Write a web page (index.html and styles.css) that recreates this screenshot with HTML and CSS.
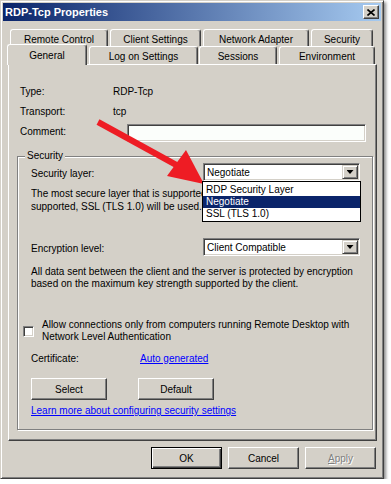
FILE: index.html
```html
<!DOCTYPE html>
<html lang="en">
<head>
    <meta charset="UTF-8">
    <meta name="viewport" content="width=device-width, initial-scale=1.0">
    <title>RDP-Tcp Properties</title>
    <link rel="stylesheet" href="styles.css">
</head>
<body>
    <div class="window">
        <div class="titlebar">
            <span class="title">RDP-Tcp Properties</span>
            <span class="close-btn">
                <svg width="8" height="7" viewBox="0 0 8 7">
                    <path d="M0.5 0.5 L7.5 6.5 M7.5 0.5 L0.5 6.5" stroke="#000" stroke-width="1.6" fill="none"/>
                </svg>
            </span>
        </div>

        <div class="dialog-body">
            <!-- Вкладки -->
            <div class="tabs">
                <div class="tab-row back-row">
                    <div class="tab tab-remote">Remote Control</div>
                    <div class="tab tab-client">Client Settings</div>
                    <div class="tab tab-network">Network Adapter</div>
                    <div class="tab tab-security">Security</div>
                </div>
                <div class="tab-row front-row">
                    <div class="tab tab-general selected">General</div>
                    <div class="tab tab-logon">Log on Settings</div>
                    <div class="tab tab-sessions">Sessions</div>
                    <div class="tab tab-env">Environment</div>
                </div>
            </div>

            <div class="panel">
                <div class="info-row">
                    <span class="info-label">Type:</span>
                    <span>RDP-Tcp</span>
                </div>
                <div class="info-row">
                    <span class="info-label">Transport:</span>
                    <span>tcp</span>
                </div>
                <div class="info-row">
                    <span class="info-label">Comment:</span>
                    <span class="text-input"></span>
                </div>

                <fieldset class="group">
                    <legend>Security</legend>

                    <div class="field-row">
                        <span class="field-label">Security layer:</span>
                        <div class="combo-wrap">
                            <div class="combo">
                                <span class="combo-value">Negotiate</span>
                                <span class="combo-btn"></span>
                            </div>
                            <ul class="combo-list">
                                <li>RDP Security Layer</li>
                                <li class="active">Negotiate</li>
                                <li>SSL (TLS 1.0)</li>
                            </ul>
                        </div>
                    </div>
                    <!-- Текст частично закрыт раскрытым списком -->
                    <p class="desc desc-layer">The most secure layer that is supported by the client will be used. If<br>supported, SSL (TLS 1.0) will be used.</p>

                    <div class="field-row enc-row">
                        <span class="field-label">Encryption level:</span>
                        <div class="combo-wrap">
                            <div class="combo">
                                <span class="combo-value">Client Compatible</span>
                                <span class="combo-btn"></span>
                            </div>
                        </div>
                    </div>
                    <p class="desc desc-enc">All data sent between the client and the server is protected by encryption<br>based on the maximum key strength supported by the client.</p>

                    <div class="check-row">
                        <span class="checkbox"></span>
                        <span>Allow connections only from computers running Remote Desktop with<br>Network Level Authentication</span>
                    </div>

                    <div class="cert-row">
                        <span class="cert-label">Certificate:</span>
                        <a class="link">Auto generated</a>
                    </div>

                    <div class="cert-buttons">
                        <span class="btn btn-wide">Select</span>
                        <span class="btn btn-wide">Default</span>
                    </div>

                    <a class="link learn-link">Learn more about configuring security settings</a>
                </fieldset>
            </div>

            <div class="footer">
                <span class="btn btn-default">OK</span>
                <span class="btn">Cancel</span>
                <span class="btn btn-disabled"><u>A</u>pply</span>
            </div>
        </div>
    </div>

    <!-- Красная стрелка поверх окна -->
    <svg class="callout-arrow" width="391" height="484" viewBox="0 0 391 484">
        <line x1="98" y1="122" x2="180" y2="167" stroke="#ee1c24" stroke-width="6"/>
        <polygon points="204,184 186,150 167,176" fill="#ee1c24"/>
    </svg>
</body>
</html>
```

FILE: styles.css
```css
/* Общие стили */
* {
    margin: 0;
    padding: 0;
    box-sizing: border-box;
}

body {
    position: relative;
    background: #fff;
    font-family: "Liberation Sans", Arial, sans-serif;
    font-size: 10px;
    color: #000;
}

/* Окно */
.window {
    width: 384px;
    height: 479px;
    background: #d4d0c8;
    border: 1px solid;
    border-color: #d4d0c8 #404040 #404040 #d4d0c8;
    box-shadow: inset 1px 1px #fff, inset -1px -1px #808080, 2px 2px 3px rgba(0, 0, 0, 0.45);
    padding: 2px;
}

.titlebar {
    height: 18px;
    display: flex;
    align-items: center;
    justify-content: space-between;
    padding: 0 2px 0 2px;
    background: linear-gradient(to right, #0a246a, #a6caf0);
}

.title {
    color: #fff;
    font-weight: bold;
    font-size: 11px;
}

.close-btn {
    width: 16px;
    height: 14px;
    display: flex;
    align-items: center;
    justify-content: center;
    background: #d4d0c8;
    border: 1px solid;
    border-color: #fff #404040 #404040 #fff;
    box-shadow: inset -1px -1px #808080;
}

.dialog-body {
    padding: 8px 4px 0 5px;
}

/* Вкладки */
.tabs {
    height: 35px;
}

.tab-row {
    display: flex;
}

.back-row {
    height: 17px;
    padding-left: 2px;
    gap: 2px;
}

.front-row {
    height: 18px;
    align-items: flex-end;
}

.tab {
    height: 100%;
    display: flex;
    align-items: center;
    justify-content: center;
    padding-top: 2px;
    background: #d4d0c8;
    border: 1px solid;
    border-bottom: none;
    border-color: #fff #404040 #404040 #fff;
    box-shadow: inset -1px 0 #808080;
    border-radius: 3px 3px 0 0;
    white-space: nowrap;
}

.tab-remote { width: 98px; }
.tab-client { width: 91px; }
.tab-network { width: 106px; }
.tab-security { width: 62px; }

.front-row .tab {
    height: 18px;
}

.front-row .tab.selected {
    position: relative;
    z-index: 2;
    height: 21px;
    margin-bottom: -1px;
    padding-top: 0;
}

.tab-general { width: 80px; margin-left: -1px; }
.tab-logon { width: 109px; margin-left: 2px; }
.tab-sessions { width: 78px; margin-left: 1px; }
.tab-env { width: 96px; margin-left: 2px; }

/* Панель вкладки */
.panel {
    height: 377px;
    border: 1px solid;
    border-color: #fff #404040 #404040 #fff;
    box-shadow: inset -1px -1px #808080;
    padding: 16px 7px 0 8px;
}

.info-row {
    height: 20px;
    display: flex;
    align-items: center;
    padding-left: 3px;
}

.info-label {
    width: 93px;
}

.text-input {
    width: 239px;
    height: 18px;
    margin: 4px 0 0 14px;
    background: #fbfefb;
    border: 1px solid;
    border-color: #808080 #fff #fff #808080;
    box-shadow: inset 1px 1px #404040, inset -1px -1px #d4d0c8;
}

/* Группа "Security" */
.group {
    margin-top: 9px;
    border: 1px solid #808080;
    box-shadow: inset 1px 1px #fff, 1px 1px #fff;
    padding: 1px 12px 12px 13px;
}

.group legend {
    margin-left: -6px;
    padding: 0 2px;
    line-height: 12px;
    background: #d4d0c8;
}

.field-row {
    height: 18px;
    display: flex;
    align-items: center;
}

.field-label {
    width: 172px;
    padding-top: 2px;
}

.combo-wrap {
    position: relative;
    width: 157px;
}

.combo {
    height: 18px;
    display: flex;
    align-items: center;
    justify-content: space-between;
    padding: 1px;
    background: #fff;
    border: 1px solid;
    border-color: #808080 #fff #fff #808080;
    box-shadow: inset 1px 1px #404040, inset -1px -1px #d4d0c8;
}

.combo-value {
    padding-left: 2px;
}

.combo-btn {
    width: 16px;
    height: 14px;
    display: flex;
    align-items: center;
    justify-content: center;
    background: #d4d0c8;
    border: 1px solid;
    border-color: #d4d0c8 #404040 #404040 #d4d0c8;
    box-shadow: inset 1px 1px #fff, inset -1px -1px #808080;
}

.combo-btn::after {
    content: "";
    width: 7px;
    height: 4px;
    background: #000;
    clip-path: polygon(0 0, 100% 0, 50% 100%);
}

/* Раскрытый список */
.combo-list {
    position: absolute;
    top: 18px;
    left: -1px;
    width: 159px;
    list-style: none;
    background: #fff;
    border: 1px solid #000;
    padding: 2px 0 1px;
    z-index: 5;
}

.combo-list li {
    height: 12px;
    line-height: 12px;
    padding-left: 3px;
}

.combo-list li.active {
    background: #0a246a;
    color: #fff;
}

.desc {
    white-space: nowrap;
}

.desc-layer {
    width: 171px;
    overflow: hidden;
    margin-top: 6px;
    line-height: 13px;
}

.enc-row {
    margin-top: 25px;
}

.desc-enc {
    margin-top: 10px;
    line-height: 12px;
}

.check-row {
    display: flex;
    margin: 29px 0 0 -8px;
    line-height: 12px;
    white-space: nowrap;
}

.checkbox {
    flex-shrink: 0;
    width: 11px;
    height: 11px;
    margin: 7px 8px 0 0;
    background: #fff;
    border: 1px solid;
    border-color: #808080 #fff #fff #808080;
    box-shadow: inset 1px 1px #404040, inset -1px -1px #d4d0c8;
}

.cert-row {
    display: flex;
    margin-top: 10px;
    line-height: 12px;
}

.cert-label {
    width: 109px;
}

.link {
    color: #0000ff;
    text-decoration: underline;
    cursor: pointer;
}

.cert-buttons {
    display: flex;
    gap: 31px;
    margin-top: 13px;
}

.learn-link {
    display: block;
    margin-top: 5px;
    line-height: 12px;
}

/* Кнопки */
.btn {
    width: 71px;
    height: 22px;
    display: flex;
    align-items: center;
    justify-content: center;
    background: #d4d0c8;
    border: 1px solid;
    border-color: #fff #404040 #404040 #fff;
    box-shadow: inset -1px -1px #808080;
    cursor: default;
}

.btn-wide {
    width: 76px;
}

.btn-default {
    border-color: #000;
    box-shadow: inset 1px 1px #fff, inset -1px -1px #404040, inset -2px -2px #808080;
}

.btn-disabled {
    color: #808080;
    text-shadow: 1px 1px #fff;
}

.footer {
    display: flex;
    justify-content: flex-end;
    gap: 6px;
    margin-top: 6px;
    padding-right: 1px;
}

/* Стрелка-выноска */
.callout-arrow {
    position: absolute;
    top: 0;
    left: 0;
    pointer-events: none;
}
```
